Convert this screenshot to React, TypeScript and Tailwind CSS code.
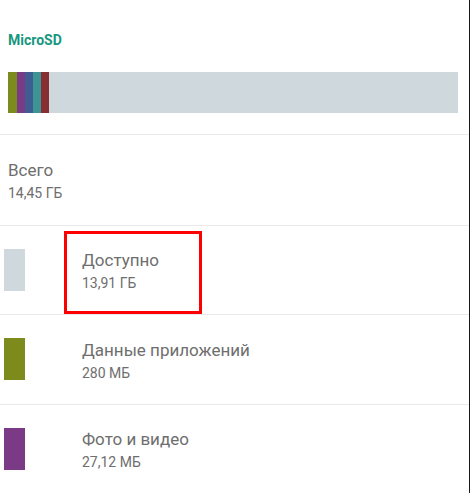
import React from "react";

const rows = [
  { color: "#cfd8dc", title: "Доступно", sub: "13,91 ГБ", highlight: true },
  { color: "#7c8b1b", title: "Данные приложений", sub: "280 МБ" },
  { color: "#7b3a86", title: "Фото и видео", sub: "27,12 МБ" },
];

export default function App() {
  return (
    <div
      className="w-[470px] h-[493px] overflow-hidden bg-white flex"
      style={{ fontFamily: "Roboto, 'Noto Sans', sans-serif" }}
    >
      <div className="w-[469px] flex flex-col">
        <div className="pt-[30px] pb-[21px] px-[8px]">
          <div className="text-[14px] leading-[20px] font-bold text-[#17977f]">MicroSD</div>
          <div className="mt-[22px] h-[41px] w-[450px] flex bg-[#cfd8dc]">
            <div className="w-[9px] bg-[#7c8b1b]" />
            <div className="w-[8px] bg-[#7b3a86]" />
            <div className="w-[8px] bg-[#3f5c93]" />
            <div className="w-[8px] bg-[#3e9394]" />
            <div className="w-[8px] bg-[#872e33]" />
          </div>
        </div>
        <div className="h-px bg-[#e9e9e9]" />
        <div className="h-[90px] px-[8px] pt-[2px] flex flex-col justify-center">
          <div className="text-[17px] leading-[24px] text-[#6e6e6e]">Всего</div>
          <div className="mt-[1px] text-[14px] leading-[20px] text-[#6e6e6e]">14,45 ГБ</div>
        </div>
        {rows.map((r, i) => (
          <React.Fragment key={i}>
            <div className="h-px bg-[#e9e9e9]" />
            <div className="relative h-[89px] flex items-center">
              <div className="ml-[4px] w-[21px] h-[42px]" style={{ backgroundColor: r.color }} />
              <div className="ml-[57px] pt-[2px] flex flex-col">
                <div className="text-[17px] leading-[24px] text-[#6e6e6e]">{r.title}</div>
                <div className="mt-[1px] text-[14px] leading-[20px] text-[#6e6e6e]">{r.sub}</div>
              </div>
              {r.highlight && (
                <div className="absolute left-[64px] top-[5px] w-[138px] h-[83px] border-[3px] border-[#ff0000]" />
              )}
            </div>
          </React.Fragment>
        ))}
      </div>
      <div className="w-px bg-[#1a1a1a]" />
    </div>
  );
}
